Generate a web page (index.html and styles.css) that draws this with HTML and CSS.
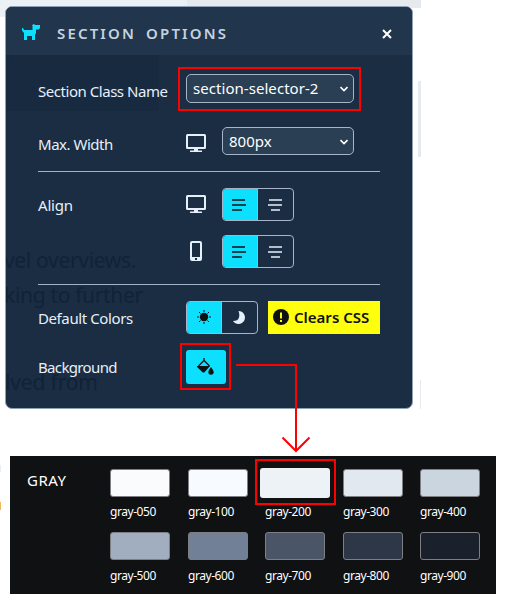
FILE: index.html
```html
<!DOCTYPE html>
<html lang="en">
<head>
<meta charset="utf-8">
<title>Section Options</title>
<link rel="stylesheet" href="styles.css">
</head>
<body>
<svg class="defs" width="0" height="0" aria-hidden="true">
  <symbol id="desktop" viewBox="0 0 20 18"><path fill-rule="evenodd" d="M1.500 0h17q1.500 0 1.500 1.500v12q0 1.500-1.500 1.500h-6.500v1.500h4v1.500h-12v-1.500h4v-1.500h-6.500q-1.500 0-1.500-1.500v-12q0-1.500 1.500-1.500zM2 2v11h16v-11z"/></symbol>
  <symbol id="phone" viewBox="0 0 12 20"><path fill-rule="evenodd" d="M2 0h8q2 0 2 2v16q0 2-2 2h-8q-2 0-2-2v-16q0-2 2-2zM2 2v14h8v-14zM5 17v2h2v-2z"/></symbol>
  <symbol id="left" viewBox="0 0 14 12"><path d="M0 1h13M0 6h14M0 11h10" stroke="currentColor" stroke-width="1.600"/></symbol>
  <symbol id="center" viewBox="0 0 14 12"><path d="M1 1h13M0 6h14M3 11h9" stroke="currentColor" stroke-width="1.600"/></symbol>
  <symbol id="chevron" viewBox="0 0 8 6"><path d="M.5 1 4 4.500 7.500 1" fill="none" stroke="currentColor" stroke-width="1.600"/></symbol>
</svg>
<div class="page-strip"></div>
<i class="trace trace-a"></i><i class="trace trace-b"></i><i class="trace trace-c"></i><i class="trace trace-d"></i><i class="trace trace-e"></i>
<section class="panel">
  <div class="ghost ghost-block"></div>
  <span class="ghost ghost-1">vel overviews.</span>
  <span class="ghost ghost-2">king to further</span>
  <span class="ghost ghost-3">lved from</span>
  <header class="head">
    <svg class="dog" viewBox="0 0 18 17"><path d="M0 4h1l1 2h8.500V2.500l3.500 2.500v4.500l-1 1V16h-3v-4H5v4H2V9L0 6.500zM10 1.500 11.500 0l2 1H18v3l-1.500 1.500H13z"/></svg>
    <h1>SECTION OPTIONS</h1>
    <svg class="close" viewBox="0 0 10 10"><path d="M1 1l8 8M9 1l-8 8"/></svg>
  </header>
  <div class="body">
    <div class="row row-class"><span class="label l-class">Section Class Name</span>
      <div class="select wide marked"><span class="v-class">section-selector-2</span><svg class="chev"><use href="#chevron"/></svg></div></div>
    <div class="row row-width"><span class="label l-width">Max. Width</span><svg class="device"><use href="#desktop"/></svg>
      <div class="select narrow"><span class="v-width">800px</span><svg class="chev"><use href="#chevron"/></svg></div></div>
    <hr>
    <div class="row row-align"><span class="label l-align">Align</span><svg class="device"><use href="#desktop"/></svg>
      <div class="toggle"><b class="on"><svg class="al"><use href="#left"/></svg></b><b><svg class="al"><use href="#center"/></svg></b></div></div>
    <div class="row row-mobile"><span class="label"></span><svg class="device phone"><use href="#phone"/></svg>
      <div class="toggle"><b class="on"><svg class="al"><use href="#left"/></svg></b><b><svg class="al"><use href="#center"/></svg></b></div></div>
    <hr>
    <div class="row row-colors"><span class="label l-colors">Default Colors</span>
      <div class="toggle"><b class="on"><svg class="sun" viewBox="0 0 14 14"><circle cx="7" cy="7" r="4.200"/><path d="M7 0v2M7 12v2M0 7h2M12 7h2M2 2l1.500 1.500M10.500 10.500 12 12M2 12l1.500-1.500M10.500 3.500 12 2" stroke="#101113"/></svg></b><b><svg class="moon" viewBox="0 0 12 13"><path d="M5.500 0A6.500 6.500 0 1 1 0 10Q5 10 6 6.500 6.800 3 5.500 0z"/></svg></b></div>
      <div class="notice"><svg viewBox="0 0 16 16"><circle cx="8" cy="8" r="8" fill="#101113"/><path d="M8 3.500v6M8 11v2" stroke="#ffff0d" stroke-width="2"/></svg><span>Clears CSS</span></div></div>
    <div class="row row-bg"><span class="label l-bg">Background</span>
      <div class="fill marked"><svg viewBox="0 0 17 17"><path d="M7 0v3M1.500 8 7 2.500 12.500 8" fill="none" stroke="#101113" stroke-width="1.300"/><path d="M0 8h13L7.500 14.200q-1 .8-2 0L0 9zM14 9q2.700 3.500 2.700 5a2.700 2.700 0 0 1-5.400 0q0-1.500 2.700-5z"/></svg></div></div>
  </div>
</section>
<section class="palette">
  <h2>GRAY</h2>
  <div class="swatches">
    <div class="sw"><i class="g050"></i><span>gray-050</span></div>
    <div class="sw"><i class="g100"></i><span>gray-100</span></div>
    <div class="sw selected"><i class="g200"></i><span>gray-200</span></div>
    <div class="sw"><i class="g300"></i><span>gray-300</span></div>
    <div class="sw"><i class="g400"></i><span>gray-400</span></div>
    <div class="sw"><i class="g500"></i><span>gray-500</span></div>
    <div class="sw"><i class="g600"></i><span>gray-600</span></div>
    <div class="sw"><i class="g700"></i><span>gray-700</span></div>
    <div class="sw"><i class="g800"></i><span>gray-800</span></div>
    <div class="sw"><i class="g900"></i><span>gray-900</span></div>
  </div>
</section>
<svg class="arrow" viewBox="0 0 80 90"><path d="M0 2h60v85M46.500 74.500 60 88l13.500-13.500"/></svg>
</body>
</html>
```
FILE: styles.css
```css
*, *::after { box-sizing: border-box; }
body { margin: 0; width: 506px; height: 602px; overflow: hidden; position: relative; background: #fff; font-family: "Noto Sans", sans-serif; }
svg { display: block; flex: none; fill: currentColor; }
.defs { position: absolute; }
.page-strip { position: absolute; left: 0; top: 0; width: 421px; height: 8px; background: linear-gradient(90deg, #ecf1f5 187px, #e6eaee 187px); }
.trace { position: absolute; background: #e6eaee; }
.trace-a { left: 0; top: 8px; width: 6px; height: 9px; background: #ecf1f5; }
.trace-b { left: 418px; top: 81px; width: 3px; height: 76px; }
.trace-c { left: 420px; top: 380px; width: 1px; height: 29px; }
.trace-d { left: 0; top: 465px; width: 1px; height: 7px; background: #e8eff6; }
.trace-e { left: 0; top: 502px; width: 1px; height: 8px; background: #f0b95b; }
.panel { position: relative; margin: 6px 0 0 5px; width: 408px; height: 403px; border: 1px solid #8ea0b6; border-radius: 7px; background: #1a2d42; color: #e6f0fa; overflow: hidden; }
.ghost { position: absolute; left: -2px; color: #102337; font-size: 21px; line-height: 28px; letter-spacing: -.32px; white-space: nowrap; }
.ghost-block { left: 0; top: 48px; width: 153px; height: 56px; background: #182a40; }
.ghost-1 { top: 239px; }
.ghost-2 { top: 274px; }
.ghost-3 { top: 361px; left: -1px; letter-spacing: -.15px; }
.head { position: relative; height: 48px; background: #21364c; display: flex; align-items: center; padding: 5px 20px 0 16px; }
.dog { width: 18px; height: 17px; color: #0ddfff; margin-top: -3px; }
h1 { margin: -1px 0 0 17px; flex: 1; font-size: 15px; line-height: 20px; font-weight: 600; letter-spacing: 2.150px; word-spacing: 4px; color: #c5d2df; white-space: nowrap; }
.close { width: 10px; height: 10px; margin-top: 1px; stroke: #fff; stroke-width: 2; }
.body { position: relative; padding: 19px 32px 0; }
.row { display: flex; align-items: center; }
.label { width: 148px; font-size: 15px; line-height: 20px; white-space: nowrap; padding-top: 5px; }
.row-class { height: 29px; }
.row-width { height: 28px; margin-top: 24px; }
.l-class { letter-spacing: -.46px; }
.l-width { letter-spacing: -.48px; }
.l-align { letter-spacing: -.2px; }
.l-colors { letter-spacing: -.4px; }
.l-bg { letter-spacing: -.65px; }
.select { position: relative; height: 29px; display: flex; align-items: center; justify-content: space-between; border: 1px solid #a5b4c9; border-radius: 5px; padding: 0 5px 1px 6px; background: #2a3e54; color: #fff; font-size: 15px; line-height: 20px; }
.wide { width: 168px; }
.v-class { letter-spacing: .05px; }
.narrow { width: 132px; height: 28px; margin-left: 16px; }
.chev { width: 8px; height: 6px; margin-top: 2px; }
.device { width: 20px; height: 18px; margin-top: 3px; }
.phone { width: 12px; height: 20px; margin: -2px 4px 0; }
hr { margin: 16px 0; border: 0; height: 1px; background: #9fb4ca; }
.row-align, .row-mobile, .row-colors { height: 33px; }
.row-align .label, .row-colors .label { padding-top: 1px; }
.row-align .device { margin-top: -1px; }
.row-mobile { margin-top: 14px; }
.toggle { width: 72px; height: 33px; display: flex; border: 1px solid #a5b4c9; border-radius: 4px; overflow: hidden; }
.device + .toggle { margin-left: 16px; }
.row-mobile .toggle { margin-left: 16px; }
.toggle b { flex: 1; display: flex; align-items: center; justify-content: center; }
.toggle .on { flex: 0 0 36px; margin: -1px 0 -1px -1px; border-right: 1px solid #a5b4c9; background: #0ddfff; color: #101113; }
.al { width: 14px; height: 12px; margin-left: -2px; }
.sun { width: 14px; height: 14px; margin-top: -1px; }
.moon { width: 12px; height: 13px; margin: -1px 0 0 -2px; }
.notice { width: 112px; height: 33px; margin-left: 10px; padding: 0 0 1px 5px; display: flex; align-items: center; gap: 5px; background: #ffff0d; color: #101113; font-size: 15px; font-weight: 600; white-space: nowrap; }
.notice svg { width: 16px; height: 16px; }
.row-bg { height: 34px; margin-top: 16px; }
.row-bg .label { padding-bottom: 1px; padding-top: 0; }
.fill { position: relative; width: 40px; height: 34px; border-radius: 3px; background: #0ddfff; color: #101113; display: flex; align-items: center; justify-content: center; }
.fill svg { width: 17px; height: 17px; margin: -1px 0 0 -2px; }
.marked::after { content: ""; position: absolute; border: 2px solid #f00; }
.select.marked::after { inset: -8px -8px -9px -9px; }
.fill.marked::after { inset: -7px -5px -6px -6px; }
.palette { position: relative; margin: 47px 0 0 10px; width: 486px; height: 138px; background: #101113; color: #fff; display: flex; padding: 13px 0 0 17px; }
h2 { margin: 1px 0 0; width: 83px; font-size: 15px; line-height: 20px; font-weight: 400; letter-spacing: .5px; }
.swatches { display: grid; grid-template-columns: 78px 77px 78px 77px 60px; grid-auto-rows: 63px; }
.sw { position: relative; width: 60px; }
.sw i { display: block; height: 28px; border: 1px solid #7d7f82; border-radius: 3px; }
.sw span { display: block; margin-top: 7px; font-size: 12px; line-height: 16px; letter-spacing: -.45px; white-space: nowrap; }
.swatches .sw:nth-child(n+6) span { margin-top: 8px; }
.swatches .selected { display: flow-root; }
.swatches .selected i { margin: -1px -5px; width: 70px; height: 30px; border: 0; }
.selected::after { content: ""; position: absolute; left: -10px; top: -10px; width: 81px; height: 46px; border: 2px solid #f00; }
.g050 { background: #fafbfd; }
.g100 { background: #f7fafe; }
.g200 { background: #edf2f7; }
.g300 { background: #e2e8f0; }
.g400 { background: #cbd5e0; }
.g500 { background: #a0aec0; }
.g600 { background: #718096; }
.g700 { background: #4a5568; }
.g800 { background: #2d3748; }
.g900 { background: #1a202c; }
.swatches .selected span { margin-top: 8px; line-height: 14px; }
.arrow { position: absolute; left: 236px; top: 363px; width: 80px; height: 90px; fill: none; stroke: #f00; stroke-width: 2; }
```
